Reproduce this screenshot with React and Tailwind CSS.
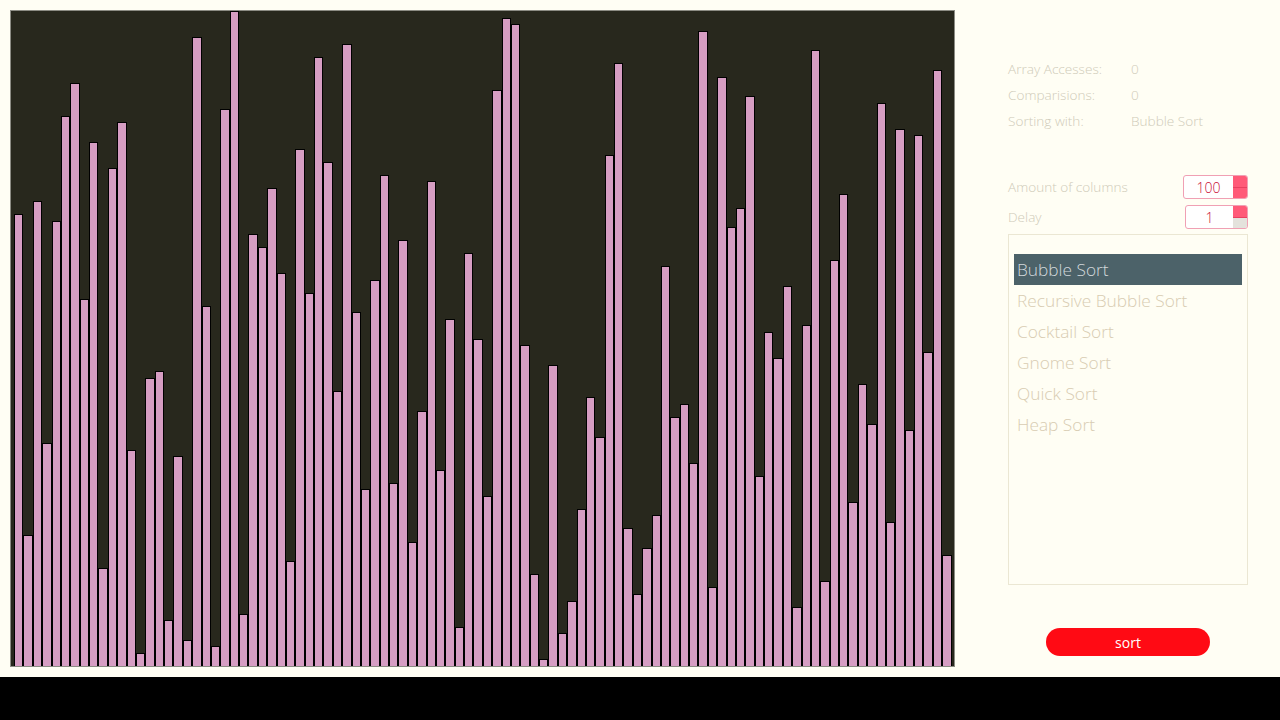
import React from 'react';

// column values, left to right (percent of canvas height)
const VALUES = [
  69, 20, 71, 34, 68, 84, 89, 56, 80, 15, 76, 83, 33, 2, 44, 45, 7, 32, 4, 96,
  55, 3, 85, 100, 8, 66, 64, 73, 60, 16, 79, 57, 93, 77, 42, 95, 54, 27, 59, 75,
  28, 65, 19, 39, 74, 30, 53, 6, 63, 50, 26, 88, 99, 98, 49, 14, 1, 46, 5, 10,
  24, 41, 35, 78, 92, 21, 11, 18, 23, 61, 38, 40, 31, 97, 12, 90, 67, 70, 87, 29,
  51, 47, 58, 9, 52, 94, 13, 62, 72, 25, 43, 37, 86, 22, 82, 36, 81, 48, 91, 17,
];

const ALGORITHMS = [
  'Bubble Sort',
  'Recursive Bubble Sort',
  'Cocktail Sort',
  'Gnome Sort',
  'Quick Sort',
  'Heap Sort',
];

function Stat({ label, value }) {
  return (
    <div className="flex h-[26px] items-center">
      <span className="w-[123px]">{label}</span>
      <span>{value}</span>
    </div>
  );
}

function NumberInput({ value, downDisabled, className }) {
  return (
    <div className={`flex h-[24px] overflow-hidden rounded-[3px] border border-[#f0a0b4] bg-white ${className}`}>
      <div className="flex flex-1 items-center justify-center text-[14px] text-[#c80c34]">{value}</div>
      <div className="flex w-[14px] flex-col">
        <div className="flex-1 border-b border-[#e84060] bg-[#ff5a78]" />
        <div className={`flex-1 ${downDisabled ? 'bg-[#e4e2dc]' : 'bg-[#ff5a78]'}`} />
      </div>
    </div>
  );
}

export default function App() {
  return (
    <div className="h-[720px] w-[1280px] bg-black" style={{ fontFamily: '"Open Sans", "Liberation Sans", sans-serif' }}>
      <div className="flex h-[677px] bg-[#fffef4]">
        {/* canvas */}
        <div className="ml-[10px] mt-[10px] flex h-[657px] w-[945px] items-end border border-[#8c8c84] bg-[#28281d] px-[3px]">
          {VALUES.map((v, i) => (
            <div
              key={i}
              className="flex-1 border-x border-t border-black bg-[#d69dc2]"
              style={{ height: `${v}%` }}
            />
          ))}
        </div>

        {/* side panel */}
        <div className="ml-[53px] flex w-[240px] flex-col text-[13.6px] font-light text-[#cfcbb9]">
          <div className="mt-[56px]">
            <Stat label="Array Accesses:" value="0" />
            <Stat label="Comparisions:" value="0" />
            <Stat label="Sorting with:" value="Bubble Sort" />
          </div>

          <div className="mt-[41px] flex h-[24px] items-center justify-between">
            <span>Amount of columns</span>
            <NumberInput value="100" className="w-[65px]" />
          </div>
          <div className="mt-[6px] flex h-[24px] items-center justify-between">
            <span>Delay</span>
            <NumberInput value="1" downDisabled className="w-[63px]" />
          </div>

          <div className="mt-[5px] h-[351px] border border-[#ebe7d3] px-[5px] pt-[19px]">
            {ALGORITHMS.map((name, i) => (
              <div
                key={name}
                className={`flex h-[31px] items-center pl-[3px] text-[17.3px] ${
                  i === 0 ? 'bg-[#4c6269] text-[#d2d8dc]' : 'text-[#d8ccb2]'
                }`}
              >
                {name}
              </div>
            ))}
          </div>

          <div className="mt-[43px] flex justify-center">
            <button className="h-[28px] w-[164px] rounded-full bg-[#ff0a14] text-[14px] font-normal text-white">
              sort
            </button>
          </div>
        </div>
      </div>
    </div>
  );
}
